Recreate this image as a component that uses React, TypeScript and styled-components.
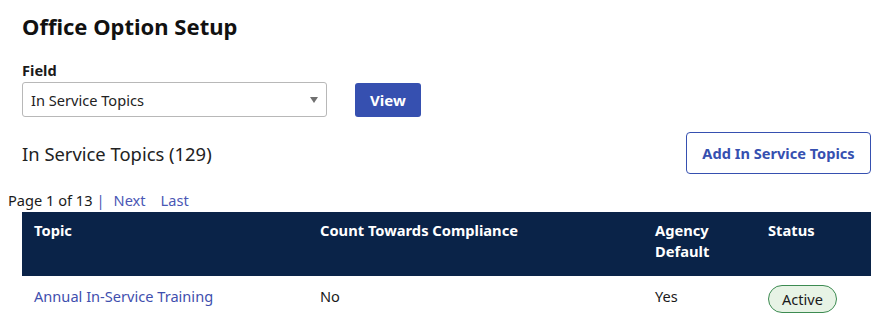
import React from "react";
import styled, { createGlobalStyle } from "styled-components";

const GlobalStyle = createGlobalStyle`
  body {
    margin: 0;
    background: #ffffff;
    font-family: "Noto Sans", "Open Sans", sans-serif;
    color: #1a1a1a;
  }
`;

const Page = styled.div`
  padding: 12px 18px 0 8px;
`;

const Section = styled.div`
  padding-left: 14px;
`;

const Title = styled.h1`
  font-size: 22px;
  font-weight: 700;
  margin: 0 0 21px;
  line-height: 28px;
  color: #111;
`;

const Label = styled.label`
  display: block;
  font-size: 14.6px;
  font-weight: 700;
  line-height: 18px;
  margin-bottom: 3px;
`;

const FieldRow = styled.div`
  display: flex;
  align-items: center;
  gap: 28px;
`;

const SelectBox = styled.div`
  width: 305px;
  height: 35px;
  box-sizing: border-box;
  border: 1px solid #b8b8b8;
  border-radius: 3px;
  display: flex;
  align-items: center;
  padding: 0 8px;
  font-size: 14.6px;
  color: #222;
`;

const Caret = styled.span`
  margin-left: auto;
  width: 0;
  height: 0;
  border-left: 4.5px solid transparent;
  border-right: 4.5px solid transparent;
  border-top: 6px solid #707070;
  margin-top: 1px;
`;

const PrimaryButton = styled.button`
  height: 34px;
  padding: 0 15px;
  background: #3650b0;
  color: #fff;
  border: none;
  border-radius: 3px;
  font-family: inherit;
  font-size: 15px;
  font-weight: 700;
`;

const ListHeader = styled.div`
  display: flex;
  align-items: center;
  justify-content: space-between;
  margin-top: 15px;
`;

const Count = styled.h2`
  margin: 0;
  font-size: 18.4px;
  font-weight: 400;
  color: #222;
`;

const OutlineButton = styled.button`
  height: 42px;
  width: 185px;
  background: #fff;
  color: #3650b0;
  border: 1px solid #3650b0;
  border-radius: 4px;
  font-family: inherit;
  font-size: 14.6px;
  font-weight: 700;
`;

const Pager = styled.div`
  display: flex;
  align-items: center;
  font-size: 14.6px;
  line-height: 20px;
  margin-top: 16px;
  color: #1a1a1a;
`;

const PagerLink = styled.a<{ $gap: number }>`
  color: #4a57b5;
  text-decoration: none;
  margin-left: ${(p) => p.$gap}px;
`;

const Pipe = styled.span`
  color: #4a57b5;
  margin-left: 4px;
`;

const Table = styled.table`
  width: 849px;
  margin-left: 14px;
  margin-top: 2px;
  border-collapse: collapse;
  border-spacing: 0;
  table-layout: fixed;
  font-size: 14.6px;
`;

const Col = styled.col<{ $w: number }>`
  width: ${(p) => p.$w}px;
`;

const HeadCell = styled.th`
  background: #0a2348;
  color: #fff;
  text-align: left;
  vertical-align: top;
  font-size: 14.7px;
  font-weight: 700;
  line-height: 21px;
  padding: 8px 12px 14px;
  height: 42px;
`;

const Cell = styled.td`
  padding: 9px 12px;
  line-height: 22px;
  vertical-align: top;
  color: #1a1a1a;
`;

const TopicLink = styled.a`
  color: #3f4fae;
  text-decoration: none;
`;

const Badge = styled.span`
  display: inline-block;
  padding: 0 13px;
  border: 1px solid #3d8b52;
  border-radius: 14px;
  background: #e7f3e5;
  color: #1a1a1a;
  font-size: 14.6px;
  line-height: 26px;
  vertical-align: top;
`;

const columns = [
  { label: "Topic", w: 286 },
  { label: "Count Towards Compliance", w: 335 },
  { label: "Agency Default", w: 113 },
  { label: "Status", w: 115 },
];

export default function App() {
  return (
    <>
      <GlobalStyle />
      <Page>
        <Section>
          <Title>Office Option Setup</Title>
          <Label>Field</Label>
          <FieldRow>
            <SelectBox>
              In Service Topics
              <Caret />
            </SelectBox>
            <PrimaryButton>View</PrimaryButton>
          </FieldRow>
          <ListHeader>
            <Count>In Service Topics (129)</Count>
            <OutlineButton>Add In Service Topics</OutlineButton>
          </ListHeader>
        </Section>
        <Pager>
          Page 1 of 13<Pipe>|</Pipe>
          <PagerLink $gap={9} href="#">Next</PagerLink>
          <PagerLink $gap={15} href="#">Last</PagerLink>
        </Pager>
        <Table>
          <colgroup>
            {columns.map((c) => (
              <Col key={c.label} $w={c.w} />
            ))}
          </colgroup>
          <thead>
            <tr>
              {columns.map((c) => (
                <HeadCell key={c.label}>{c.label}</HeadCell>
              ))}
            </tr>
          </thead>
          <tbody>
            <tr>
              <Cell>
                <TopicLink href="#">Annual In-Service Training</TopicLink>
              </Cell>
              <Cell>No</Cell>
              <Cell>Yes</Cell>
              <Cell>
                <Badge>Active</Badge>
              </Cell>
            </tr>
          </tbody>
        </Table>
      </Page>
    </>
  );
}
